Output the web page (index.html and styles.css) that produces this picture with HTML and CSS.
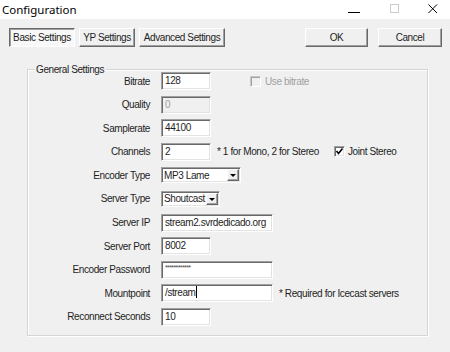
FILE: index.html
```html
<!DOCTYPE html>
<html lang="en">
<head>
    <meta charset="UTF-8">
    <title>Configuration</title>
    <link rel="stylesheet" href="styles.css">
</head>
<body>

<div class="window">

    <!-- Title bar -->
    <div class="titlebar">
        <span class="title">Configuration</span>
        <div class="controls">
            <svg width="40" height="19"><path d="M14 12.5 H26" stroke="#000" stroke-width="1"/></svg>
            <svg width="40" height="19"><rect x="16.5" y="4.5" width="8" height="8" fill="none" stroke="#cccccc"/></svg>
            <svg width="36" height="19"><path d="M14.5 4.5 L23 13 M23 4.5 L14.5 13" stroke="#000" stroke-width="1"/></svg>
        </div>
    </div>

    <!-- Tabs and dialog buttons -->
    <div class="toolbar">
        <div class="tabs">
            <div class="btn pressed tab-basic">Basic Settings</div>
            <div class="btn tab-yp">YP Settings</div>
            <div class="btn tab-adv">Advanced Settings</div>
        </div>
        <div class="actions">
            <div class="btn btn-ok">OK</div>
            <div class="btn btn-cancel">Cancel</div>
        </div>
    </div>

    <!-- General Settings group -->
    <div class="group">
        <span class="group-title">General Settings</span>
        <div class="form">
            <label>Bitrate</label>
            <div class="row">
                <div class="field">128</div>
                <span class="check disabled use-bitrate"></span>
                <span class="muted">Use bitrate</span>
            </div>

            <label>Quality</label>
            <div class="row"><div class="field disabled">0</div></div>

            <label>Samplerate</label>
            <div class="row"><div class="field">44100</div></div>

            <label>Channels</label>
            <div class="row">
                <div class="field">2</div>
                <span class="hint">* 1 for Mono, 2 for Stereo</span>
                <span class="check joint">
                    <svg width="9" height="9"><path d="M1.5 4 L3.5 6.5 L7.5 1.5" fill="none" stroke="#000" stroke-width="1.6"/></svg>
                </span>
                <span class="check-label">Joint Stereo</span>
            </div>

            <label>Encoder Type</label>
            <div class="row">
                <div class="combo combo-encoder"><span class="combo-text">MP3 Lame</span><span class="arrow"></span></div>
            </div>

            <label>Server Type</label>
            <div class="row">
                <div class="combo combo-server"><span class="combo-text">Shoutcast</span><span class="arrow"></span></div>
            </div>

            <label>Server IP</label>
            <div class="row"><div class="field wide">stream2.svrdedicado.org</div></div>

            <label>Server Port</label>
            <div class="row"><div class="field">8002</div></div>

            <label>Encoder Password</label>
            <div class="row"><div class="field wide"><span class="secret">************</span></div></div>

            <label>Mountpoint</label>
            <div class="row">
                <div class="field wide">/stream<span class="caret"></span></div>
                <span class="hint">* Required for Icecast servers</span>
            </div>

            <label>Reconnect Seconds</label>
            <div class="row"><div class="field">10</div></div>
        </div>
    </div>

</div>

</body>
</html>
```

FILE: styles.css
```css
body {
    margin: 0;
    background: #f0f0f0;
    font-family: 'Liberation Sans', Arial, sans-serif;
    font-size: 10px;
    letter-spacing: -0.4px;
    color: #1e1e1e;
}

.window {
    width: 450px;
    height: 352px;
    overflow: hidden;
}

/* title bar */
.titlebar {
    height: 19px;
    background: #fff;
    display: flex;
    align-items: center;
    justify-content: space-between;
}

.title {
    font-family: 'Noto Sans', sans-serif;
    font-size: 11.5px;
    letter-spacing: 0;
    padding-left: 2px;
    color: #000;
}

.controls {
    display: flex;
}

.controls svg {
    display: block;
}

/* toolbar */
.toolbar {
    display: flex;
    justify-content: space-between;
    padding: 9px 8px 0 9px;
}

.tabs, .actions {
    display: flex;
    gap: 4px;
}

.actions {
    gap: 10px;
}

.btn {
    box-sizing: border-box;
    height: 19px;
    line-height: 17px;
    text-align: center;
    background: #f0f0f0;
    border: 1px solid;
    border-color: #fff #696969 #696969 #fff;
    box-shadow: inset -1px -1px #a0a0a0;
}

.btn.pressed {
    background: #f8f8f8;
    border-color: #696969 #fff #fff #696969;
    box-shadow: inset 1px 1px #a0a0a0;
}

.tab-basic { width: 66px; }
.tab-yp { width: 56px; }
.tab-adv { width: 86px; }
.btn-ok { width: 63px; }
.btn-cancel { width: 64px; }

/* group box */
.group {
    position: relative;
    box-sizing: border-box;
    height: 267px;
    margin: 22px 22px 0 27px;
    padding-top: 2px;
    border: 1px solid #d5d5d5;
    box-shadow: inset 1px 1px #fff, 1px 1px #fff;
}

.group-title {
    position: absolute;
    top: -7px;
    left: 6px;
    padding: 0 2px;
    line-height: 13px;
    background: #f0f0f0;
}

.form {
    display: grid;
    grid-template-columns: 122px 1fr;
    column-gap: 11px;
    grid-auto-rows: 18px;
    row-gap: 5.6px;
}

.form label {
    text-align: right;
    align-self: center;
}

.row {
    display: flex;
    align-items: center;
}

/* sunken fields */
.field, .combo, .check {
    box-sizing: border-box;
    background: #fff;
    border: 1px solid;
    border-color: #a0a0a0 #fff #fff #a0a0a0;
    box-shadow: inset 1px 1px #696969, inset -1px -1px #e3e3e3;
}

.field {
    width: 50px;
    height: 18px;
    padding: 0 3px;
    line-height: 16px;
    white-space: nowrap;
    overflow: hidden;
}

.field.wide {
    width: 112px;
}

.field.disabled {
    background: #f0f0f0;
    color: #a0a0a0;
}

.secret {
    font-size: 7px;
    letter-spacing: -0.6px;
    color: #444;
    vertical-align: top;
    line-height: 11px;
}

.caret {
    display: inline-block;
    width: 1px;
    height: 12px;
    background: #000;
    vertical-align: -2px;
}

.combo {
    display: flex;
    align-items: center;
    height: 16px;
    padding: 1px 1px 1px 2px;
}

.combo-encoder { width: 80px; }
.combo-server { width: 59px; }

.combo-text {
    flex: 1;
    white-space: nowrap;
}

.arrow {
    position: relative;
    flex: none;
    box-sizing: border-box;
    width: 12px;
    height: 12px;
    background: #f0f0f0;
    border: 1px solid;
    border-color: #fff #696969 #696969 #fff;
    box-shadow: inset -1px -1px #a0a0a0;
}

.arrow::after {
    content: "";
    position: absolute;
    left: 2px;
    top: 4px;
    border-left: 3px solid transparent;
    border-right: 3px solid transparent;
    border-top: 3px solid #000;
}

/* checkboxes */
.check {
    width: 11px;
    height: 11px;
    display: flex;
    align-items: center;
    justify-content: center;
}

.check svg {
    display: block;
}

.check.disabled {
    background: #f0f0f0;
    border-color: #c8c8c8 #fff #fff #c8c8c8;
    box-shadow: inset 1px 1px #a0a0a0;
}

.use-bitrate {
    margin-left: 39px;
}

.muted {
    margin-left: 4px;
    color: #a0a0a0;
}

.hint {
    margin-left: 6px;
}

.joint {
    margin-left: 15px;
}

.check-label {
    margin-left: 3px;
}
```
